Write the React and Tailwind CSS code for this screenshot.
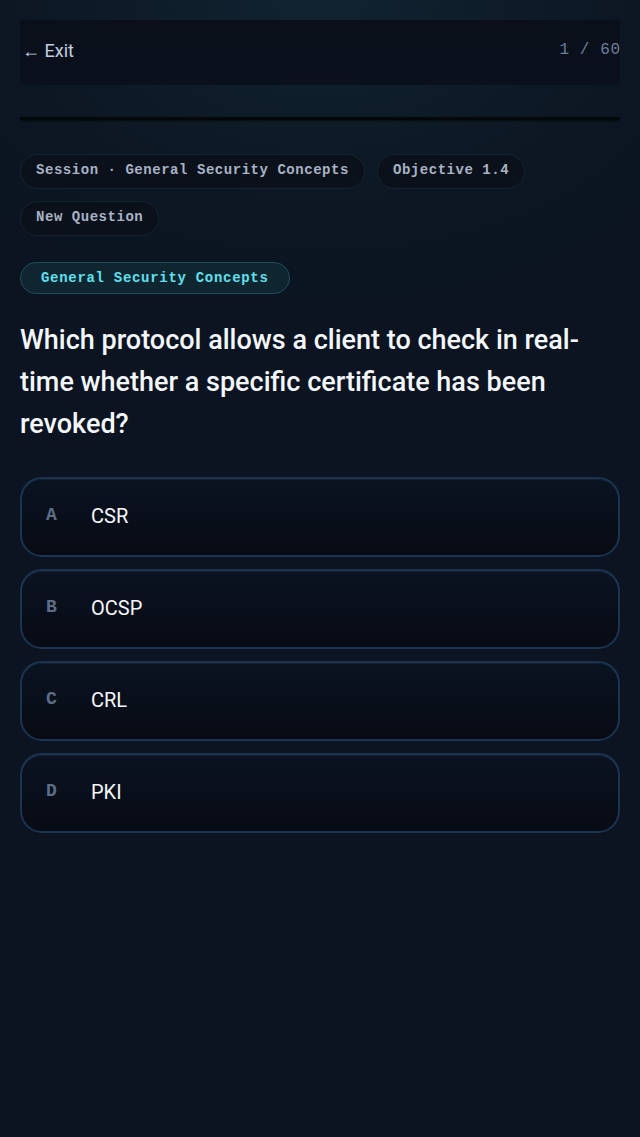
import React from "react";

const options = [
  { key: "A", text: "CSR" },
  { key: "B", text: "OCSP" },
  { key: "C", text: "CRL" },
  { key: "D", text: "PKI" },
];

const chips = ["Session · General Security Concepts", "Objective 1.4", "New Question"];

export default function App() {
  return (
    <div className="min-h-screen bg-[#0b1420] bg-[radial-gradient(ellipse_80%_30%_at_50%_0%,#112331_0%,#0c1723_60%,#0b1420_100%)] px-5 pt-5 font-['Roboto',sans-serif]">
      <div className="flex h-[65px] items-center justify-between bg-gradient-to-b from-[#0a0f1a] to-[#0a111c] pb-[5px]">
        <button className="pl-[2px] text-[18px] text-[#c3cee0]">← Exit</button>
        <span className="mr-[-0.6px] font-['Liberation_Mono',monospace] text-[16px] tracking-[0.6px] text-[#6c7f9a]">
          1 / 60
        </span>
      </div>

      <div className="mt-[32px] h-[3px] rounded-full bg-[#04070c] shadow-[0_1px_2px_rgba(0,0,0,0.6)]">
        <div className="h-full w-[1.6%] rounded-full bg-[#04070c]" />
      </div>

      <div className="mt-[34px] flex flex-wrap gap-3">
        {chips.map((c) => (
          <span
            key={c}
            className="flex h-[35px] items-center rounded-full border border-[#172231] bg-[#0a111b] px-[15px] pb-[2px] font-['Liberation_Mono',monospace] text-[14px] font-bold tracking-[0.54px] text-[#a8b3c5]"
          >
            {c}
          </span>
        ))}
      </div>

      <div className="mt-[26px] flex">
        <span className="flex h-[32px] items-center rounded-full border border-[#1f4b5a] bg-[#0f2631] px-5 font-['Liberation_Mono',monospace] text-[14px] font-bold tracking-[0.7px] text-[#5fe0ef]">
          General Security Concepts
        </span>
      </div>

      <h1 className="mt-[25px] pr-5 text-[27px] font-medium leading-[42px] text-[#f3f6fa]">
        Which protocol allows a client to check in real-time whether a specific certificate has been revoked?
      </h1>

      <div className="mt-[32px] flex flex-col gap-3">
        {options.map((o) => (
          <button
            key={o.key}
            className="flex h-[80px] items-center rounded-[22px] border-2 border-[#1b3452] bg-gradient-to-b from-[#0b1321] to-[#070b14] pl-6 pb-[3px] text-left shadow-[inset_0_1px_0_rgba(60,100,150,0.15)]"
          >
            <span className="w-[45px] font-['Liberation_Mono',monospace] text-[18px] font-bold text-[#5d6f88]">
              {o.key}
            </span>
            <span className="text-[20px] text-[#f5f7fa]">{o.text}</span>
          </button>
        ))}
      </div>
    </div>
  );
}
